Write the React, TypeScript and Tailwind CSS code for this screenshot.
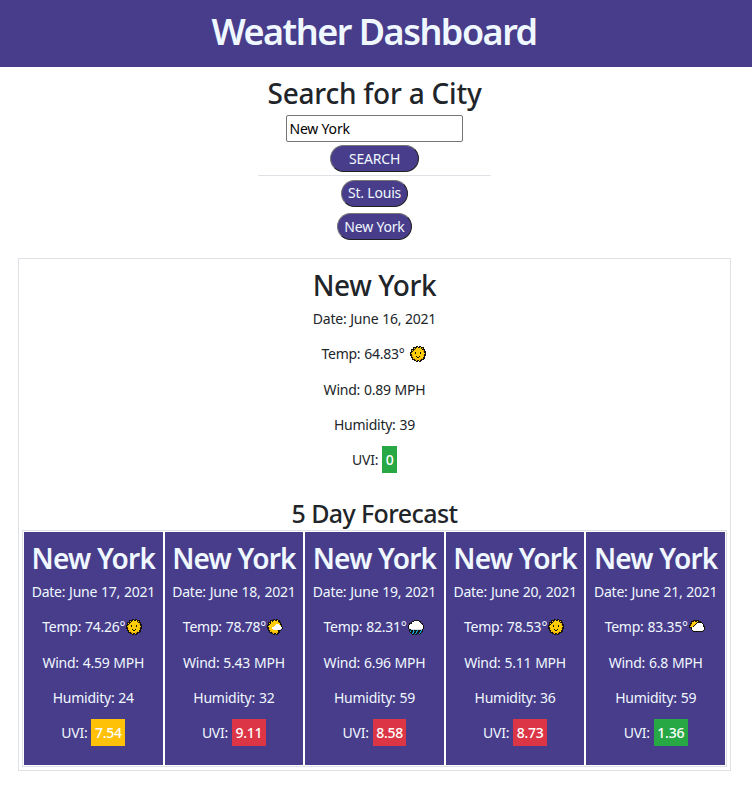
type Kind = "sun" | "partly" | "rain" | "cloud";

const COLORS: Record<string, string> = {
  k: "#17130f",
  y: "#ffcc08",
  o: "#e39c0b",
  w: "#ffffff",
  g: "#d8dadd",
  b: "#12a5d8",
  d: "#0b4a66",
};

const ICONS: Record<Kind, string[]> = {
  sun: [
    "......kk.kk.....",
    "...kkkkykkykkk..",
    "...kykyyyyykyk..",
    ".kkkkyyyyyyykkk.",
    ".kykyyyyyyyyyok.",
    ".kkyyyyyyyyyyokk",
    "kkyyykyyyykyyykk",
    "kyyyykyyyykyyyyk",
    "kkyyyyyyyyyyyykk",
    "kkoyyyyyyyyyyokk",
    ".kyyyykyykyyyyk.",
    ".kkoyyykkyyyykk.",
    "..kyoyyyyyyoykk.",
    "..kkkooyyookkk..",
    "....kkykkykk....",
    "......kk.kk.....",
  ],
  partly: [
    "......kk.kk.....",
    "...kkkkykkykk...",
    "...kykyyyyykk...",
    ".kkkyyyyyyyokk..",
    ".kykyyyyyyyyyk..",
    ".kkyyyyyywwwykk.",
    "kkyyyyyywwwwwyk.",
    "kyyyyyywwwwwwwk.",
    "kkyyywwwwwwwwwwk",
    "kkoyywwwwwwwwwgk",
    ".kyyyygwwwwwwgk.",
    ".kkoyyyyyyokkk..",
    "..kyoyyyyyykk...",
    "..kkkooyyookk...",
    "....kkykkykk....",
    "......kk.kk.....",
  ],
  rain: [
    "................",
    "......kkkkk.....",
    "....kkwwwwwkk...",
    "...kwwwwwwwwk...",
    ".kkkwwwwwwwwwkk.",
    ".kwwwwwwwwwwwwk.",
    "kwwwwwwwwwwwwwwk",
    "kwwwwwwwwwwwwwwk",
    "kwwwwwwwwwwwwwwk",
    "kgwwwwwwwwwwwwgk",
    ".kkgggggggggggk.",
    ".kdkkbkkkbkkkbk.",
    ".kbkkbdkbdkkbdk.",
    "..kkdbkkbkkdbk..",
    "...kbdkbdkkbk...",
    "....kk.kk..k....",
  ],
  cloud: [
    "................",
    "....kkkkkk......",
    "..kkkykkykkk....",
    "..kyyyyykkkkk...",
    ".kkyyyykwwwwwk..",
    ".koyyykwwwwwwwk.",
    "kkyyokwwwwwwwwk.",
    "kyyykwwwwwwwwwkk",
    "kkkwwwwwwwwwwwwk",
    "..kwwwwwwwwwwwwk",
    "..kwwwwwwwwwwwwk",
    "...kgwwwwwwwwgk.",
    "....kkkkkkkkkk..",
    "................",
    "................",
    "................",
  ],
};

function WeatherIcon({ kind }: { kind: Kind }) {
  return (
    <svg viewBox="0 0 16 16" width="16" height="16" shapeRendering="crispEdges" className="mr-[2px] shrink-0">
      {ICONS[kind].flatMap((row, y) =>
        [...row].map((c, x) =>
          c === "." ? null : <rect key={`${x}-${y}`} x={x} y={y} width="1" height="1" fill={COLORS[c]} />,
        ),
      )}
    </svg>
  );
}

interface Weather {
  date: string;
  temp: string;
  icon: Kind;
  wind: string;
  humidity: string;
  uvi: string;
  uviColor: string;
}

const today: Weather = { date: "June 16, 2021", temp: "64.83°", icon: "sun", wind: "0.89", humidity: "39", uvi: "0", uviColor: "bg-[#28a745]" };

const forecast: Weather[] = [
  { date: "June 17, 2021", temp: "74.26°", icon: "sun", wind: "4.59", humidity: "24", uvi: "7.54", uviColor: "bg-[#ffc107]" },
  { date: "June 18, 2021", temp: "78.78°", icon: "partly", wind: "5.43", humidity: "32", uvi: "9.11", uviColor: "bg-[#dc3545]" },
  { date: "June 19, 2021", temp: "82.31°", icon: "rain", wind: "6.96", humidity: "59", uvi: "8.58", uviColor: "bg-[#dc3545]" },
  { date: "June 20, 2021", temp: "78.53°", icon: "sun", wind: "5.11", humidity: "36", uvi: "8.73", uviColor: "bg-[#dc3545]" },
  { date: "June 21, 2021", temp: "83.35°", icon: "cloud", wind: "6.8", humidity: "59", uvi: "1.36", uviColor: "bg-[#28a745]" },
];

function Details({ w, gap }: { w: Weather; gap: string }) {
  const row = "flex h-[35.4px] items-center justify-center whitespace-nowrap";
  return (
    <div className="text-[14px] tracking-[-0.25px] [word-spacing:0.5px]">
      <p className={row}>Date: {w.date}</p>
      <p className={`${row} ${gap}`}>
        <span>Temp: {w.temp}</span>
        <WeatherIcon kind={w.icon} />
      </p>
      <p className={row}>Wind: {w.wind} MPH</p>
      <p className={row}>Humidity: {w.humidity}</p>
      <p className={`${row} gap-[4px]`}>
        <span>UVI:</span>
        <span className={`mb-px flex h-[27px] items-center px-[3.5px] pt-px font-medium tracking-[-0.25px] text-white ${w.uviColor}`}>{w.uvi}</span>
      </p>
    </div>
  );
}

const pill =
  "flex items-center justify-center rounded-full border border-t-[#767676] border-l-[#767676] border-r-[#212121] border-b-[#212121] bg-[#483d8b] text-[14px] tracking-[-0.2px] text-[#f0f8ff]";

export default function App() {
  return (
    <div className="h-[791px] bg-white font-['Noto_Sans','Open_Sans',sans-serif] text-[#212529]">
      <header className="flex h-[67px] justify-center bg-[#483d8b]">
        <h1 className="-ml-[4px] text-[36px] leading-[64px] font-semibold tracking-[-1.5px] whitespace-nowrap text-[#f0f8ff]">Weather Dashboard</h1>
      </header>
      <section className="mr-[261px] ml-[258px] flex flex-col items-center">
        <h2 className="h-[48px] text-[28px] leading-[52px] font-medium tracking-[-0.22px] whitespace-nowrap">Search for a City</h2>
        <input
          defaultValue="New York"
          className="mr-px h-[27px] w-[177px] rounded-[2px] border border-[#767676] px-[3px] text-[14px] tracking-[-0.2px] text-black"
        />
        <button className={`${pill} mt-[3px] h-[27px] w-[89px]`}>SEARCH</button>
        <hr className="mt-[3px] w-full border-t border-[#dee2e6]" />
        <button className={`${pill} mt-[4px] h-[27px] w-[67px] pb-[2px]`}>St. Louis</button>
        <button className={`${pill} mt-[6px] h-[27px] w-[75px]`}>New York</button>
      </section>
      <main className="mt-[18px] ml-[18px] h-[513px] w-[713px] border border-[#dee2e6] px-[3px]">
        <h2 className="h-[41.6px] text-center text-[28px] leading-[53px] font-medium tracking-[-0.4px]">New York</h2>
        <Details w={today} gap="gap-[5px]" />
        <h3 className="mt-[18.4px] h-[34px] text-center text-[25px] leading-[34px] font-medium tracking-[-0.6px]">5 Day Forecast</h3>
        <div className="grid h-[237px] grid-cols-5 gap-[2px] border border-[#dee2e6] p-px">
          {forecast.map((w) => (
            <article key={w.date} className="min-w-0 bg-[#483d8b] text-[#f0f8ff]">
              <h2 className="h-[41.6px] text-center text-[28px] leading-[53px] font-semibold tracking-[-0.8px] whitespace-nowrap">New York</h2>
              <Details w={w} gap="gap-px" />
            </article>
          ))}
        </div>
      </main>
    </div>
  );
}
